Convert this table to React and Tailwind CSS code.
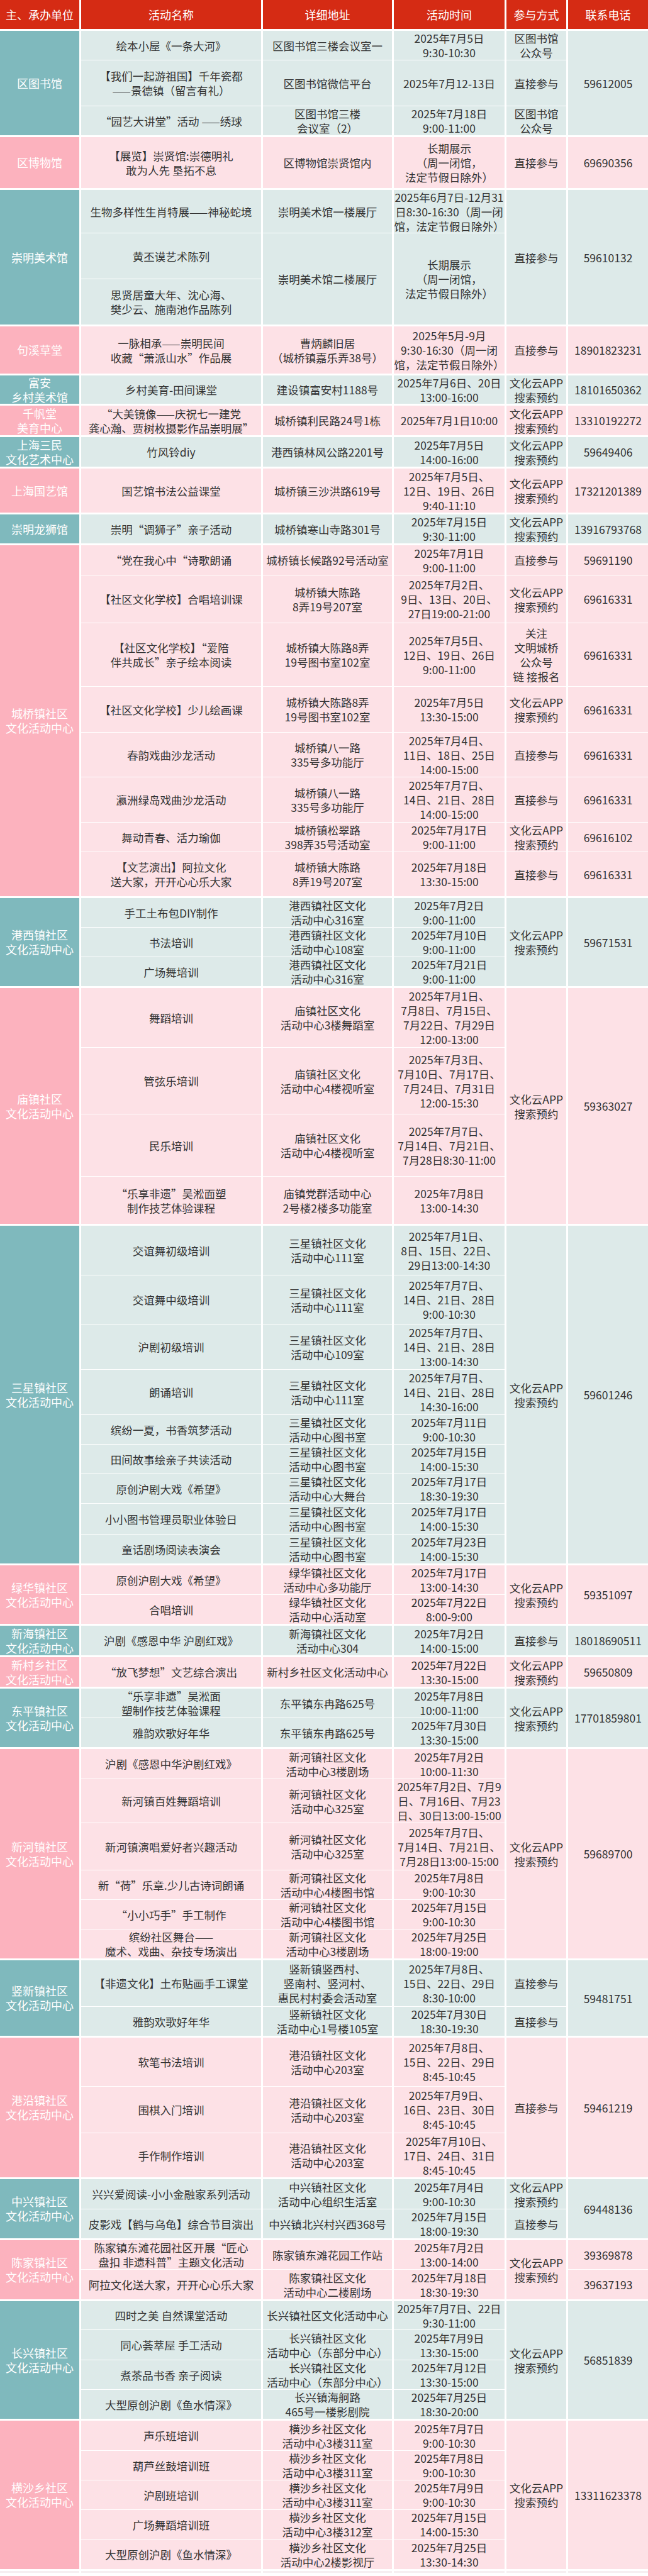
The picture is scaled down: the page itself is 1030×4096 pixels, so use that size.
import React from "react";

const SPAN = {
  1: "row-span-1",
  2: "row-span-2",
  3: "row-span-3",
  4: "row-span-4",
  5: "row-span-5",
  6: "row-span-6",
  7: "row-span-7",
  8: "row-span-8",
  9: "row-span-9",
};

const TONES = {
  t: { org: "bg-[#7fb9bd]", cell: "bg-[#ddeae9]" },
  p: { org: "bg-[#fcb2be]", cell: "bg-[#fde1e6]" },
};

const COLS = "grid grid-cols-[126px_286px_205px_176px_95px_127px] gap-x-[3px] gap-y-px";

const APP = "文化云APP\n搜索预约";
const JOIN = "直接参与";

// b: row edges measured on the 1080px source, last one = start of the next block
const groups = [
  { org: "区图书馆", tone: "t", b: [51, 101, 177, 229], rows: [
    ["绘本小屋《一条大河》", "区图书馆三楼会议室一", "2025年7月5日\n9:30-10:30", "区图书馆\n公众号", ["59612005", 3]],
    ["【我们一起游祖国】千年瓷都\n——景德镇（留言有礼）", "区图书馆微信平台", "2025年7月12-13日", JOIN, null],
    ["“园艺大讲堂”活动 ——绣球", "区图书馆三楼\n会议室（2）", "2025年7月18日\n9:00-11:00", "区图书馆\n公众号", null],
  ]},
  { org: "区博物馆", tone: "p", b: [229, 317], rows: [
    ["【展览】崇贤馆:崇德明礼\n敢为人先 垦拓不息", "区博物馆崇贤馆内", "长期展示\n（周一闭馆，\n法定节假日除外）", JOIN, "69690356"],
  ]},
  { org: "崇明美术馆", tone: "t", b: [317, 389, 466, 545], rows: [
    ["生物多样性生肖特展——神秘蛇境", "崇明美术馆一楼展厅", "2025年6月7日-12月31\n日8:30-16:30（周一闭\n馆，法定节假日除外）", [JOIN, 3], ["59610132", 3]],
    ["黄丕谟艺术陈列", ["崇明美术馆二楼展厅", 2], ["长期展示\n（周一闭馆，\n法定节假日除外）", 2], null, null],
    ["思贤居童大年、沈心海、\n樊少云、施南池作品陈列", null, null, null, null],
  ]},
  { org: "句溪草堂", tone: "p", b: [545, 626], rows: [
    ["一脉相承——崇明民间\n收藏“萧派山水”作品展", "曹炳麟旧居\n（城桥镇嘉乐弄38号）", "2025年5月-9月\n9:30-16:30（周一闭\n馆，法定节假日除外）", JOIN, "18901823231"],
  ]},
  { org: "富安\n乡村美术馆", tone: "t", b: [626, 677], rows: [
    ["乡村美育-田间课堂", "建设镇富安村1188号", "2025年7月6日、20日\n13:00-16:00", APP, "18101650362"],
  ]},
  { org: "千帆堂\n美育中心", tone: "p", b: [677, 729], rows: [
    ["“大美镜像——庆祝七一建党\n龚心瀚、贾树枚摄影作品崇明展”", "城桥镇利民路24号1栋", "2025年7月1日10:00", APP, "13310192272"],
  ]},
  { org: "上海三民\n文化艺术中心", tone: "t", b: [729, 782], rows: [
    ["竹风铃diy", "港西镇林风公路2201号", "2025年7月5日\n14:00-16:00", APP, "59649406"],
  ]},
  { org: "上海国艺馆", tone: "p", b: [782, 858], rows: [
    ["国艺馆书法公益课堂", "城桥镇三沙洪路619号", "2025年7月5日、\n12日、19日、26日\n9:40-11:10", APP, "17321201389"],
  ]},
  { org: "崇明龙狮馆", tone: "t", b: [858, 910], rows: [
    ["崇明“调狮子”亲子活动", "城桥镇寒山寺路301号", "2025年7月15日\n9:30-11:00", APP, "13916793768"],
  ]},
  { org: "城桥镇社区\n文化活动中心", tone: "p", b: [910, 960, 1040, 1146, 1222, 1297, 1372, 1422, 1498], rows: [
    ["“党在我心中“诗歌朗诵", "城桥镇长候路92号活动室", "2025年7月1日\n9:00-11:00", JOIN, "59691190"],
    ["【社区文化学校】合唱培训课", "城桥镇大陈路\n8弄19号207室", "2025年7月2日、\n9日、13日、20日、\n27日19:00-21:00", APP, "69616331"],
    ["【社区文化学校】“爱陪\n伴共成长”亲子绘本阅读", "城桥镇大陈路8弄\n19号图书室102室", "2025年7月5日、\n12日、19日、26日\n9:00-11:00", "关注\n文明城桥\n公众号\n链 接报名", "69616331"],
    ["【社区文化学校】少儿绘画课", "城桥镇大陈路8弄\n19号图书室102室", "2025年7月5日\n13:30-15:00", APP, "69616331"],
    ["春韵戏曲沙龙活动", "城桥镇八一路\n335号多功能厅", "2025年7月4日、\n11日、18日、25日\n14:00-15:00", JOIN, "69616331"],
    ["瀛洲绿岛戏曲沙龙活动", "城桥镇八一路\n335号多功能厅", "2025年7月7日、\n14日、21日、28日\n14:00-15:00", JOIN, "69616331"],
    ["舞动青春、活力瑜伽", "城桥镇松翠路\n398弄35号活动室", "2025年7月17日\n9:00-11:00", APP, "69616102"],
    ["【文艺演出】阿拉文化\n送大家，开开心心乐大家", "城桥镇大陈路\n8弄19号207室", "2025年7月18日\n13:30-15:00", JOIN, "69616331"],
  ]},
  { org: "港西镇社区\n文化活动中心", tone: "t", b: [1498, 1548, 1597, 1649], rows: [
    ["手工土布包DIY制作", "港西镇社区文化\n活动中心316室", "2025年7月2日\n9:00-11:00", [APP, 3], ["59671531", 3]],
    ["书法培训", "港西镇社区文化\n活动中心108室", "2025年7月10日\n9:00-11:00", null, null],
    ["广场舞培训", "港西镇社区文化\n活动中心316室", "2025年7月21日\n9:00-11:00", null, null],
  ]},
  { org: "庙镇社区\n文化活动中心", tone: "p", b: [1649, 1748, 1859, 1963, 2045], rows: [
    ["舞蹈培训", "庙镇社区文化\n活动中心3楼舞蹈室", "2025年7月1日、\n7月8日、7月15日、\n7月22日、7月29日\n12:00-13:00", [APP, 4], ["59363027", 4]],
    ["管弦乐培训", "庙镇社区文化\n活动中心4楼视听室", "2025年7月3日、\n7月10日、7月17日、\n7月24日、7月31日\n12:00-15:30", null, null],
    ["民乐培训", "庙镇社区文化\n活动中心4楼视听室", "2025年7月7日、\n7月14日、7月21日、\n7月28日8:30-11:00", null, null],
    ["“乐享非遗”吴淞面塑\n制作技艺体验课程", "庙镇党群活动中心\n2号楼2楼多功能室", "2025年7月8日\n13:00-14:30", null, null],
  ]},
  { org: "三星镇社区\n文化活动中心", tone: "t", b: [2045, 2128, 2210, 2285, 2361, 2410, 2460, 2509, 2560, 2612], rows: [
    ["交谊舞初级培训", "三星镇社区文化\n活动中心111室", "2025年7月1日、\n8日、15日、22日、\n29日13:00-14:30", [APP, 9], ["59601246", 9]],
    ["交谊舞中级培训", "三星镇社区文化\n活动中心111室", "2025年7月7日、\n14日、21日、28日\n9:00-10:30", null, null],
    ["沪剧初级培训", "三星镇社区文化\n活动中心109室", "2025年7月7日、\n14日、21日、28日\n13:00-14:30", null, null],
    ["朗诵培训", "三星镇社区文化\n活动中心111室", "2025年7月7日、\n14日、21日、28日\n14:30-16:00", null, null],
    ["缤纷一夏，书香筑梦活动", "三星镇社区文化\n活动中心图书室", "2025年7月11日\n9:00-10:30", null, null],
    ["田间故事绘亲子共读活动", "三星镇社区文化\n活动中心图书室", "2025年7月15日\n14:00-15:30", null, null],
    ["原创沪剧大戏《希望》", "三星镇社区文化\n活动中心大舞台", "2025年7月17日\n18:30-19:30", null, null],
    ["小小图书管理员职业体验日", "三星镇社区文化\n活动中心图书室", "2025年7月17日\n14:00-15:30", null, null],
    ["童话剧场阅读表演会", "三星镇社区文化\n活动中心图书室", "2025年7月23日\n14:00-15:30", null, null],
  ]},
  { org: "绿华镇社区\n文化活动中心", tone: "p", b: [2612, 2661, 2713], rows: [
    ["原创沪剧大戏《希望》", "绿华镇社区文化\n活动中心多功能厅", "2025年7月17日\n13:00-14:30", [APP, 2], ["59351097", 2]],
    ["合唱培训", "绿华镇社区文化\n活动中心活动室", "2025年7月22日\n8:00-9:00", null, null],
  ]},
  { org: "新海镇社区\n文化活动中心", tone: "t", b: [2713, 2765], rows: [
    ["沪剧《感恩中华 沪剧红戏》", "新海镇社区文化\n活动中心304", "2025年7月2日\n14:00-15:00", JOIN, "18018690511"],
  ]},
  { org: "新村乡社区\n文化活动中心", tone: "p", b: [2765, 2817], rows: [
    ["“放飞梦想”文艺综合演出", "新村乡社区文化活动中心", "2025年7月22日\n13:30-15:00", APP, "59650809"],
  ]},
  { org: "东平镇社区\n文化活动中心", tone: "t", b: [2817, 2867, 2918], rows: [
    ["“乐享非遗”吴淞面\n塑制作技艺体验课程", "东平镇东冉路625号", "2025年7月8日\n10:00-11:00", [APP, 2], ["17701859801", 2]],
    ["雅韵欢歌好年华", "东平镇东冉路625号", "2025年7月30日\n13:30-15:00", null, null],
  ]},
  { org: "新河镇社区\n文化活动中心", tone: "p", b: [2918, 2968, 3042, 3121, 3170, 3219, 3271], rows: [
    ["沪剧《感恩中华沪剧红戏》", "新河镇社区文化\n活动中心3楼剧场", "2025年7月2日\n10:00-11:30", [APP, 6], ["59689700", 6]],
    ["新河镇百姓舞蹈培训", "新河镇社区文化\n活动中心325室", "2025年7月2日、7月9\n日、7月16日、7月23\n日、30日13:00-15:00", null, null],
    ["新河镇演唱爱好者兴趣活动", "新河镇社区文化\n活动中心325室", "2025年7月7日、\n7月14日、7月21日、\n7月28日13:00-15:00", null, null],
    ["新“荷”乐章.少儿古诗词朗诵", "新河镇社区文化\n活动中心4楼图书馆", "2025年7月8日\n9:00-10:30", null, null],
    ["“小小巧手”手工制作", "新河镇社区文化\n活动中心4楼图书馆", "2025年7月15日\n9:00-10:30", null, null],
    ["缤纷社区舞台——\n魔术、戏曲、杂技专场演出", "新河镇社区文化\n活动中心3楼剧场", "2025年7月25日\n18:00-19:00", null, null],
  ]},
  { org: "竖新镇社区\n文化活动中心", tone: "t", b: [3271, 3348, 3400], rows: [
    ["【非遗文化】土布贴画手工课堂", "竖新镇竖西村、\n竖南村、竖河村、\n惠民村村委会活动室", "2025年7月8日、\n15日、22日、29日\n8:30-10:00", JOIN, ["59481751", 2]],
    ["雅韵欢歌好年华", "竖新镇社区文化\n活动中心1号楼105室", "2025年7月30日\n18:30-19:30", JOIN, null],
  ]},
  { org: "港沿镇社区\n文化活动中心", tone: "p", b: [3400, 3482, 3559, 3636], rows: [
    ["软笔书法培训", "港沿镇社区文化\n活动中心203室", "2025年7月8日、\n15日、22日、29日\n8:45-10:45", [JOIN, 3], ["59461219", 3]],
    ["围棋入门培训", "港沿镇社区文化\n活动中心203室", "2025年7月9日、\n16日、23日、30日\n8:45-10:45", null, null],
    ["手作制作培训", "港沿镇社区文化\n活动中心203室", "2025年7月10日、\n17日、24日、31日\n8:45-10:45", null, null],
  ]},
  { org: "中兴镇社区\n文化活动中心", tone: "t", b: [3636, 3686, 3738], rows: [
    ["兴兴爱阅读-小小金融家系列活动", "中兴镇社区文化\n活动中心组织生活室", "2025年7月4日\n9:00-10:30", APP, ["69448136", 2]],
    ["皮影戏【鹤与乌龟】综合节目演出", "中兴镇北兴村兴西368号", "2025年7月15日\n18:00-19:30", JOIN, null],
  ]},
  { org: "陈家镇社区\n文化活动中心", tone: "p", b: [3738, 3787, 3839], rows: [
    ["陈家镇东滩花园社区开展“匠心\n盘扣 非遗科普”主题文化活动", "陈家镇东滩花园工作站", "2025年7月2日\n13:00-14:00", [APP, 2], "39369878"],
    ["阿拉文化送大家，开开心心乐大家", "陈家镇社区文化\n活动中心二楼剧场", "2025年7月18日\n18:30-19:30", null, "39637193"],
  ]},
  { org: "长兴镇社区\n文化活动中心", tone: "t", b: [3839, 3888, 3938, 3987, 4039], rows: [
    ["四时之美 自然课堂活动", "长兴镇社区文化活动中心", "2025年7月7日、22日\n9:30-11:00", [APP, 4], ["56851839", 4]],
    ["同心荟萃屋 手工活动", "长兴镇社区文化\n活动中心（东部分中心）", "2025年7月9日\n13:30-15:00", null, null],
    ["煮茶品书香 亲子阅读", "长兴镇社区文化\n活动中心（东部分中心）", "2025年7月12日\n13:30-15:00", null, null],
    ["大型原创沪剧《鱼水情深》", "长兴镇海舸路\n465号一楼影剧院", "2025年7月25日\n18:30-20:00", null, null],
  ]},
  { org: "横沙乡社区\n文化活动中心", tone: "p", b: [4039, 4089, 4138, 4188, 4237, 4290], rows: [
    ["声乐班培训", "横沙乡社区文化\n活动中心3楼311室", "2025年7月7日\n9:00-10:30", [APP, 5], ["13311623378", 5]],
    ["葫芦丝鼓培训班", "横沙乡社区文化\n活动中心3楼311室", "2025年7月8日\n9:00-10:30", null, null],
    ["沪剧班培训", "横沙乡社区文化\n活动中心3楼311室", "2025年7月9日\n9:00-10:30", null, null],
    ["广场舞蹈培训班", "横沙乡社区文化\n活动中心3楼312室", "2025年7月15日\n14:00-15:30", null, null],
    ["大型原创沪剧《鱼水情深》", "横沙乡社区文化\n活动中心2楼影视厅", "2025年7月25日\n13:30-14:30", null, null],
  ]},
];

const heads = ["主、承办单位", "活动名称", "详细地址", "活动时间", "参与方式", "联系电话"];

const tracksOf = (b) => {
  const T = b.map((v) => Math.round(v * 0.953));
  return T.slice(1)
    .map((v, i) => v - T[i] - (i === T.length - 2 ? 3 : 1))
    .map((t) => `${t}px`)
    .join(" ");
};

const Group = ({ g }) => {
  const tone = TONES[g.tone];
  const cells = [
    <div key="org" className={`${SPAN[g.rows.length]} ${tone.org} flex items-center justify-center text-center whitespace-pre text-white text-[18px] leading-[23px]`}>
      {g.org}
    </div>,
  ];
  g.rows.forEach((row, i) => {
    row.forEach((v, j) => {
      if (v == null) return;
      const [text, span] = Array.isArray(v) ? v : [v, 1];
      cells.push(
        <div key={i + "-" + j} className={`${SPAN[span]} ${tone.cell} flex items-center justify-center text-center whitespace-pre`}>
          {text}
        </div>
      );
    });
  });
  return (
    <div className={COLS} style={{ gridTemplateRows: tracksOf(g.b) }}>
      {cells}
    </div>
  );
};

export default () => {
  return (
    <div className="w-[1030px] bg-white text-[#333] text-[17.5px] leading-[23px] font-['Noto_Sans_CJK_SC','Noto_Sans',sans-serif]">
      <div className="flex flex-col gap-[3px]">
        <div className={`${COLS} h-[46px]`}>
          {heads.map((h) => (
            <div key={h} className="bg-[#d52b14] flex items-center justify-center text-white text-[18px]">
              {h}
            </div>
          ))}
        </div>
        {groups.map((g) => (
          <Group key={g.org} g={g} />
        ))}
        <div className={`${COLS} h-[3px]`}>
          {heads.map((h) => (
            <div key={h} className="bg-[#f6eff1]" />
          ))}
        </div>
      </div>
    </div>
  );
};
